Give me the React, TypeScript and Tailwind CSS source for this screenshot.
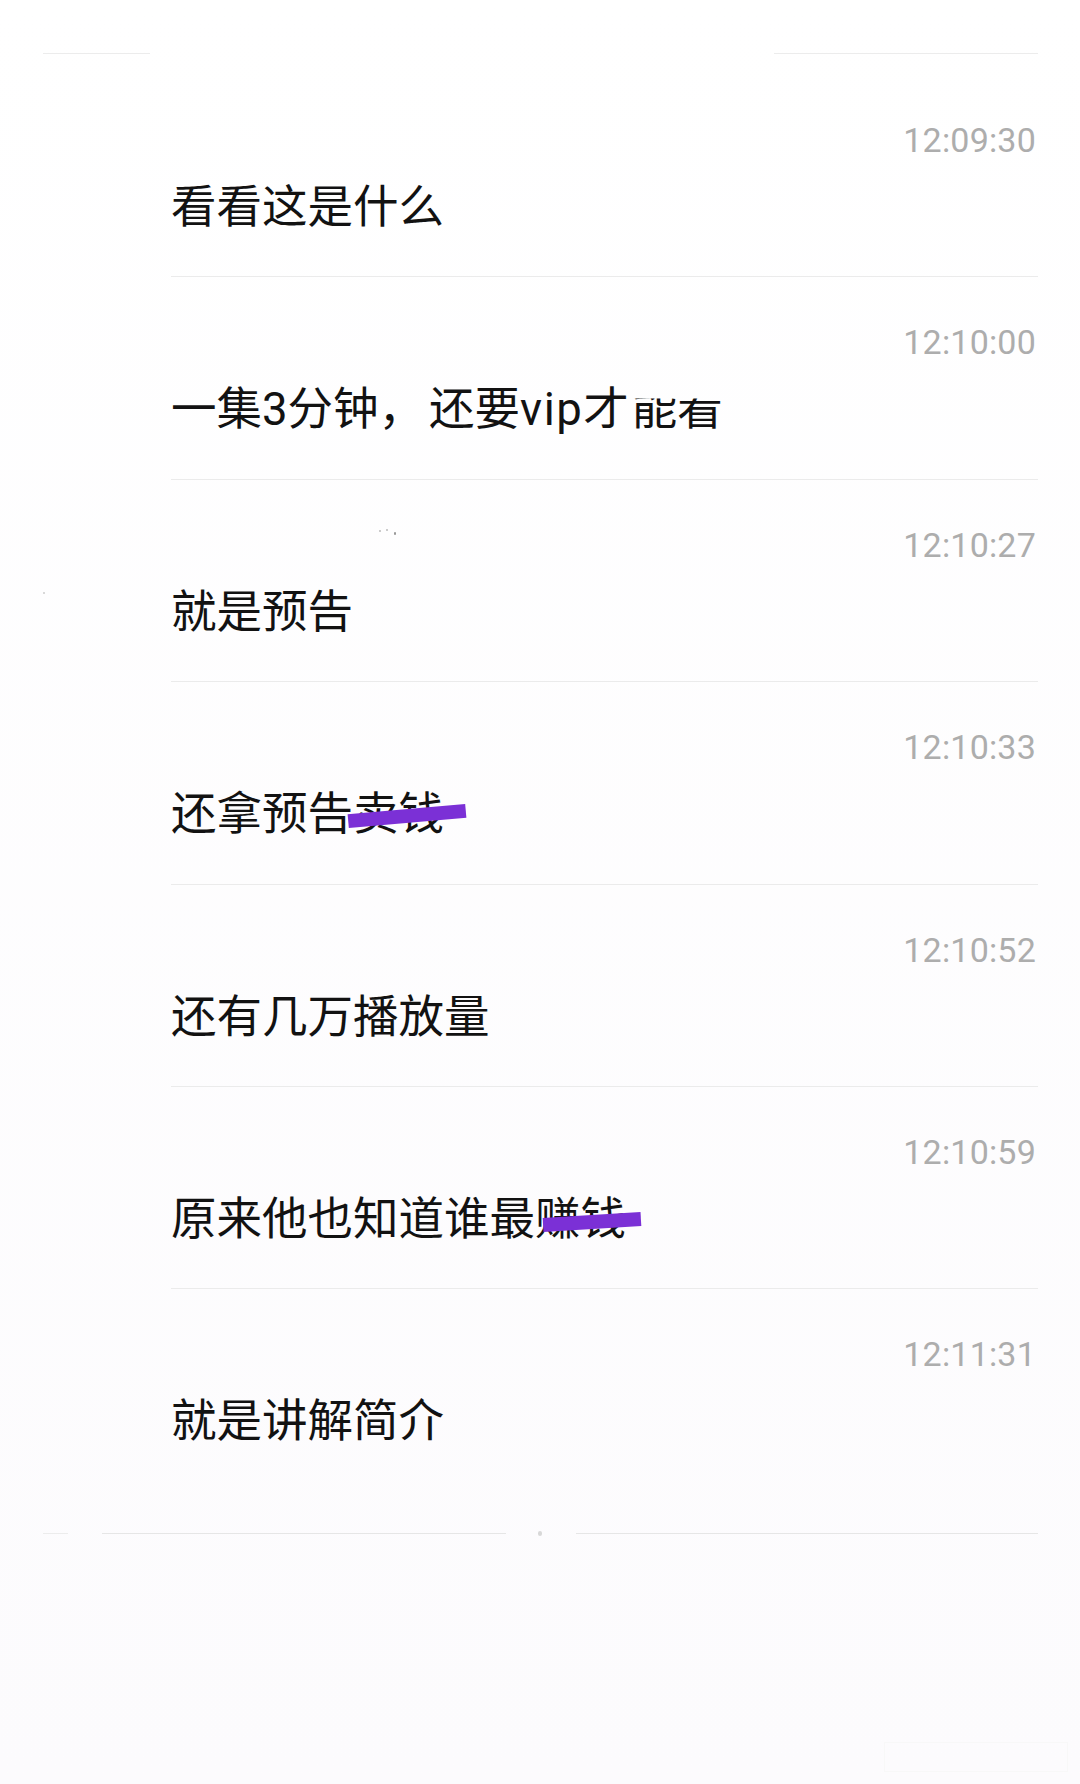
import React from "react";

type Msg = { time: string; text: React.ReactNode; strike?: "r1" | "r2" };

const FONT = { fontFamily: '"Roboto", "Noto Sans CJK SC", sans-serif' };

const messages: Msg[] = [
  { time: "12:09:30", text: "看看这是什么" },
  {
    time: "12:10:00",
    text: (
      <>
        一集3分钟<span className="mr-[5px]">，</span>还要<span className="tracking-[1.5px]">vip</span>才
        <span className="ml-[3px] inline-block [clip-path:inset(11px_0_0_0)] leading-[1]">能看</span>
      </>
    ),
  },
  { time: "12:10:27", text: "就是预告" },
  { time: "12:10:33", text: "还拿预告卖钱", strike: "r1" },
  { time: "12:10:52", text: "还有几万播放量" },
  { time: "12:10:59", text: "原来他也知道谁最赚钱", strike: "r2" },
  { time: "12:11:31", text: "就是讲解简介" },
];

function Row({ m, last }: { m: Msg; last: boolean }) {
  return (
    <div className={`relative h-[202.4px] ${last ? "" : "border-b border-[#ebebeb]"}`}>
      <div className="pt-[45px] h-[85px] pr-[2px] flex justify-end">
        <span className="h-[40px] leading-[40px] text-[34px] text-[#adadad] tracking-[0.2px]" style={{ fontFamily: '"Roboto", sans-serif' }}>
          {m.time}
        </span>
      </div>
      <div className="relative mt-[20px] h-[56px] leading-[56px] text-[45.5px] text-[#121212] whitespace-nowrap" style={FONT}>
        {m.text}
        {m.strike === "r1" && (
          <span className="absolute left-[177px] top-[22px] w-[118px] h-[14px] bg-[#7b30d6] -rotate-[5deg]" />
        )}
        {m.strike === "r2" && (
          <span className="absolute left-[372px] top-[23px] w-[98px] h-[14px] bg-[#7b30d6] -rotate-[3.5deg]" />
        )}
      </div>
    </div>
  );
}

export default function App() {
  return (
    <div className="relative w-[1080px] h-[1784px] overflow-hidden bg-gradient-to-b from-white to-[#fcfbfd]">
      {/* top line */}
      <div className="pt-[53px] flex pl-[43px] pr-[42px]">
        <div className="w-[107px] h-px bg-[#ececec]" />
        <div className="flex-1" />
        <div className="w-[264px] h-px bg-[#ececec]" />
      </div>

      <div className="mt-[21px] pl-[171px] pr-[42px]">
        {messages.map((m, i) => (
          <Row key={i} m={m} last={i === messages.length - 1} />
        ))}
      </div>

      {/* bottom line */}
      <div className="mt-[39px] flex items-center pl-[43px] pr-[42px]">
        <div className="w-[25px] h-px bg-[#ececec]" />
        <div className="w-[34px]" />
        <div className="w-[404px] h-px bg-[#e6e6e6]" />
        <div className="w-[32px]" />
        <div className="w-[4px] h-[5px] rounded-full bg-[#d8d8d8]" />
        <div className="w-[34px]" />
        <div className="flex-1 h-px bg-[#e6e6e6]" />
      </div>

      {/* faint specks */}
      <span className="absolute left-[379px] top-[530px] w-[2px] h-[2px] bg-[#bbbbbb] rounded-full" />
      <span className="absolute left-[386px] top-[529px] w-[2px] h-[2px] bg-[#bbbbbb] rounded-full" />
      <span className="absolute left-[394px] top-[532px] w-[2px] h-[3px] bg-[#999999] rounded-full" />
      <span className="absolute left-[43px] top-[592px] w-[2px] h-[2px] bg-[#cccccc] rounded-full" />

      {/* faint watermark box */}
      <div className="absolute left-[884px] top-[1742px] w-[184px] h-[30px] border border-[#f8f8f8]" />
    </div>
  );
}
